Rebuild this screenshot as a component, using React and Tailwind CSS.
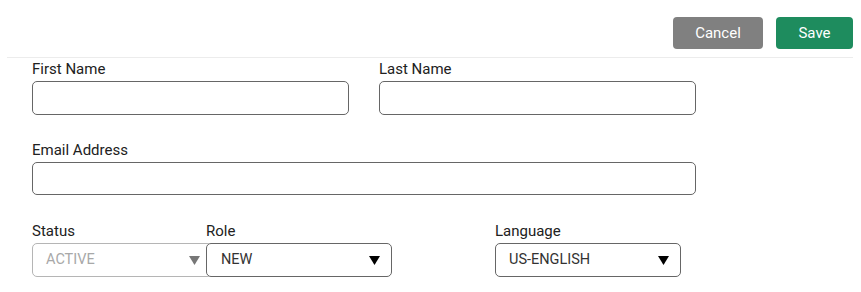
function Field({ label, className = "", children }) {
  return (
    <div className={className}>
      <div className="text-[15px] leading-[17px] text-[#212121] mb-[3px]">{label}</div>
      {children}
    </div>
  );
}

function Caret({ color }) {
  return (
    <svg width="11" height="9" viewBox="0 0 11 9">
      <polygon points="0,0 11,0 5.5,9" fill={color} />
    </svg>
  );
}

function SelectBox({ value, disabled, className = "" }) {
  return (
    <div
      className={
        "h-[34px] rounded-[5px] border flex items-center justify-between pl-[13px] pr-[11px] text-[14.5px] bg-white " +
        (disabled ? "border-[#b5b5b5] text-[#a8a8a8]" : "border-[#666] text-[#333]") +
        " " +
        className
      }
    >
      <span>{value}</span>
      <Caret color={disabled ? "#777" : "#000"} />
    </div>
  );
}

export default function App() {
  return (
    <div className="w-[861px] h-[292px] bg-white font-['Roboto',sans-serif] pl-[7px] pr-[8px]">
      <div className="flex justify-end gap-[13px] pt-[17px] pb-[8px] border-b border-[#ececec]">
        <button className="w-[90px] h-[32px] rounded-[4px] bg-[#808080] text-white text-[15px]">Cancel</button>
        <button className="w-[77px] h-[32px] rounded-[4px] bg-[#1e8c5e] text-white text-[15px]">Save</button>
      </div>

      <div className="pl-[25px] pt-[3px]">
        <div className="flex gap-[30px]">
          <Field label="First Name" className="w-[317px]">
            <div className="h-[34px] rounded-[5px] border border-[#666]" />
          </Field>
          <Field label="Last Name" className="w-[317px]">
            <div className="h-[34px] rounded-[5px] border border-[#666]" />
          </Field>
        </div>

        <Field label="Email Address" className="w-[664px] mt-[27px]">
          <div className="h-[33px] rounded-[5px] border border-[#666]" />
        </Field>

        <div className="flex mt-[28px]">
          <Field label="Status" className="w-[174px]">
            <SelectBox value="ACTIVE" disabled className="w-[180px] pr-[5px]" />
          </Field>
          <Field label="Role" className="w-[289px] relative">
            <SelectBox value="NEW" className="w-[186px] pl-[14px]" />
          </Field>
          <Field label="Language" className="w-[186px]">
            <SelectBox value="US-ENGLISH" />
          </Field>
        </div>
      </div>
    </div>
  );
}
